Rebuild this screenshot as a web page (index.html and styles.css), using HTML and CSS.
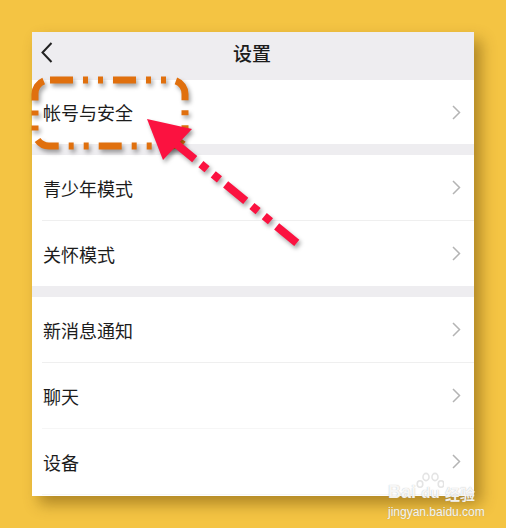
FILE: index.html
```html
<!DOCTYPE html>
<html lang="zh">
<head>
<meta charset="utf-8">
<link rel="stylesheet" href="styles.css">
</head>
<body>
<div class="panel">
  <div class="header">
    <svg class="back" width="12" height="21" viewBox="0 0 12 21"><polyline points="10.5,1 1.5,10.5 10.5,20" fill="none" stroke="#222" stroke-width="2"/></svg>
    <div class="title">设置</div>
  </div>
  <div class="row first"><span>帐号与安全</span><svg class="chev" width="9" height="15" viewBox="0 0 9 15"><polyline points="1,1 7.5,7.5 1,14" fill="none" stroke="#b4b4b4" stroke-width="1.5"/></svg></div>
  <div class="band"></div>
  <div class="row sep"><span>青少年模式</span><svg class="chev" width="9" height="15" viewBox="0 0 9 15"><polyline points="1,1 7.5,7.5 1,14" fill="none" stroke="#b4b4b4" stroke-width="1.5"/></svg></div>
  <div class="row"><span>关怀模式</span><svg class="chev" width="9" height="15" viewBox="0 0 9 15"><polyline points="1,1 7.5,7.5 1,14" fill="none" stroke="#b4b4b4" stroke-width="1.5"/></svg></div>
  <div class="band"></div>
  <div class="row sep"><span>新消息通知</span><svg class="chev" width="9" height="15" viewBox="0 0 9 15"><polyline points="1,1 7.5,7.5 1,14" fill="none" stroke="#b4b4b4" stroke-width="1.5"/></svg></div>
  <div class="row sep faint"><span>聊天</span><svg class="chev" width="9" height="15" viewBox="0 0 9 15"><polyline points="1,1 7.5,7.5 1,14" fill="none" stroke="#b4b4b4" stroke-width="1.5"/></svg></div>
  <div class="row sep faint"><span>设备</span><svg class="chev" width="9" height="15" viewBox="0 0 9 15"><polyline points="1,1 7.5,7.5 1,14" fill="none" stroke="#b4b4b4" stroke-width="1.5"/></svg></div>
</div>

<svg class="overlay" width="506" height="528" viewBox="0 0 506 528">
  <g class="shadowed">
    <rect x="35" y="80" width="150" height="66" rx="14" fill="none" stroke="#e0700e" stroke-width="7" stroke-dasharray="23 10 5 10 5 10" stroke-dashoffset="-1"/>
  </g>
  <g class="shadowed">
    <line x1="174.6" y1="142.6" x2="297" y2="243" stroke="#fb1240" stroke-width="8" stroke-dasharray="26 8 8 8 8 8"/>
    <polygon points="147,119 192,129 163,160" fill="#fb1240"/>
  </g>
</svg>

<div class="watermark">
  <div class="wm-top">
    <span class="bai">Bai</span>
    <span class="paw">
      <svg width="28" height="28" viewBox="0 0 28 28">
        <g fill="none" stroke="rgba(225,225,225,0.9)" stroke-width="1.6">
          <ellipse cx="10" cy="5" rx="3" ry="3.6"/>
          <ellipse cx="19" cy="5" rx="3" ry="3.6"/>
          <ellipse cx="4" cy="12" rx="2.8" ry="3.3"/>
          <ellipse cx="25" cy="12" rx="2.8" ry="3.3"/>
        </g>
      </svg>
      <span class="du">du</span>
    </span>
    <span class="jy">经验</span>
  </div>
  <div class="wm-url">jingyan.baidu.com</div>
</div>
</body>
</html>
```

FILE: styles.css
```css
html, body {
  margin: 0;
  padding: 0;
}
body {
  width: 506px;
  height: 528px;
  background: #f4c443;
  position: relative;
  overflow: hidden;
  font-family: "Noto Sans CJK SC", "Noto Sans", sans-serif;
  color: #1c1c1c;
}
.panel {
  position: relative;
  margin: 32px 0 0 32px;
  width: 442px;
  height: 464px;
  background: #fff;
  box-shadow: 7px 8px 14px rgba(90, 60, 0, 0.45);
  display: flex;
  flex-direction: column;
}
.header {
  height: 48px;
  background: #eeedf0;
  display: flex;
  align-items: flex-start;
  justify-content: center;
  position: relative;
  flex: none;
}
.back {
  position: absolute;
  left: 9px;
  top: 10px;
}
.title {
  font-size: 19px;
  font-weight: 500;
  line-height: 1;
  margin-top: 11px;
  margin-left: -2px;
}
.row {
  flex: none;
  height: 65px;
  display: flex;
  align-items: center;
  justify-content: space-between;
  padding: 0 13px 0 11px;
  font-size: 18px;
  position: relative;
}
.row.first {
  height: 64px;
}
.row.sep {
  border-bottom: 1px solid #efefef;
  margin-left: 10px;
  padding-left: 1px;
}
.row.faint {
  border-bottom-color: #f6f6f6;
}
.row span {
  line-height: 1;
}
.band {
  flex: none;
  height: 11px;
  background: #eeedf0;
}
.chev {
  display: block;
}
.overlay {
  position: absolute;
  left: 0;
  top: 0;
  pointer-events: none;
}
.shadowed {
  filter: drop-shadow(2px 3px 2px rgba(0, 0, 0, 0.35));
}
.watermark {
  position: absolute;
  left: 388px;
  top: 472px;
  width: 92px;
  color: rgba(255, 255, 255, 0.9);
  text-shadow: 0 0 1px rgba(150, 150, 150, 0.7);
}
.wm-top {
  display: flex;
  align-items: flex-end;
  height: 29px;
}
.bai {
  font-family: "Liberation Sans", sans-serif;
  font-weight: bold;
  font-size: 18px;
  line-height: 1;
}
.paw {
  position: relative;
  width: 29px;
  height: 29px;
  display: flex;
  align-items: flex-end;
  justify-content: center;
}
.paw svg {
  position: absolute;
  left: 0;
  top: 0;
}
.du {
  font-family: "Liberation Sans", sans-serif;
  font-weight: bold;
  font-size: 15px;
  line-height: 1;
  padding-bottom: 1px;
}
.jy {
  font-size: 15px;
  font-weight: bold;
  line-height: 1;
}
.wm-url {
  font-family: "Liberation Sans", sans-serif;
  font-size: 12px;
  line-height: 1;
  margin-top: 5px;
}
```
